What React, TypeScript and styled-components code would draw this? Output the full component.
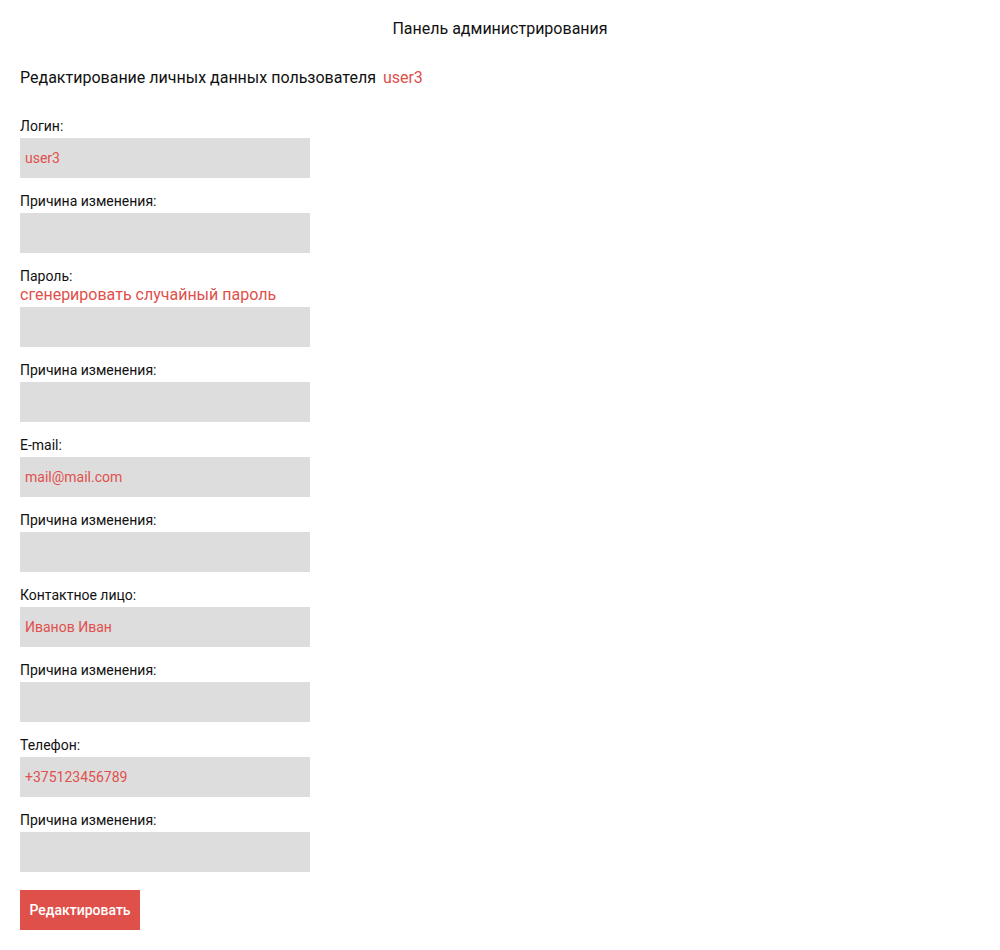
import React from "react";
import styled, { createGlobalStyle } from "styled-components";

const GlobalStyle = createGlobalStyle`
  html, body {
    margin: 0;
    padding: 0;
    background: #ffffff;
  }
  body {
    font-family: Roboto, "Liberation Sans", Arial, sans-serif;
    color: #111111;
  }
`;

const Page = styled.div`
  padding: 19px 20px 20px;
`;

const Title = styled.h1`
  margin: 0;
  text-align: center;
  font-size: 16px;
  font-weight: 400;
  line-height: 20px;
`;

const Heading = styled.h2`
  margin: 29px 0 0;
  font-size: 16px;
  font-weight: 400;
  line-height: 20px;
`;

const Accent = styled.span`
  margin-left: 3px;
  color: #e0504c;
`;

const Form = styled.form`
  display: flex;
  flex-direction: column;
  margin-top: 30px;
  gap: 15px;
`;

const Field = styled.div`
  display: flex;
  flex-direction: column;
`;

const Label = styled.label`
  display: block;
  font-size: 14px;
  line-height: 16px;
`;

const GenerateLink = styled.a`
  display: block;
  margin-top: 2px;
  font-size: 16px;
  line-height: 17px;
  color: #e0504c;
  text-decoration: none;
  cursor: pointer;
  width: max-content;
`;

const Input = styled.input`
  box-sizing: border-box;
  width: 290px;
  height: 40px;
  margin-top: 4px;
  padding: 0 5px;
  border: none;
  outline: none;
  background: #dddddd;
  font-family: Roboto, "Liberation Sans", Arial, sans-serif;
  font-size: 14px;
  color: #e0504c;
`;

const Button = styled.button`
  align-self: flex-start;
  margin-top: 3px;
  width: 120px;
  height: 40px;
  border: none;
  background: #e0504a;
  color: #ffffff;
  font-family: Roboto, "Liberation Sans", Arial, sans-serif;
  font-size: 14px;
  font-weight: 500;
  cursor: pointer;
`;

type FieldDef = {
  label: string;
  value: string;
  withGenerate?: boolean;
};

const fields: FieldDef[] = [
  { label: "Логин:", value: "user3" },
  { label: "Причина изменения:", value: "" },
  { label: "Пароль:", value: "", withGenerate: true },
  { label: "Причина изменения:", value: "" },
  { label: "E-mail:", value: "mail@mail.com" },
  { label: "Причина изменения:", value: "" },
  { label: "Контактное лицо:", value: "Иванов Иван" },
  { label: "Причина изменения:", value: "" },
  { label: "Телефон:", value: "+375123456789" },
  { label: "Причина изменения:", value: "" },
];

export default function App() {
  return (
    <>
      <GlobalStyle />
      <Page>
        <Title>Панель администрирования</Title>
        <Heading>
          Редактирование личных данных пользователя<Accent> user3</Accent>
        </Heading>
        <Form onSubmit={(e) => e.preventDefault()}>
          {fields.map((f, i) => (
            <Field key={i}>
              <Label htmlFor={`f${i}`}>{f.label}</Label>
              {f.withGenerate && (
                <GenerateLink>сгенерировать случайный пароль</GenerateLink>
              )}
              <Input id={`f${i}`} defaultValue={f.value} />
            </Field>
          ))}
          <Button type="submit">Редактировать</Button>
        </Form>
      </Page>
    </>
  );
}
